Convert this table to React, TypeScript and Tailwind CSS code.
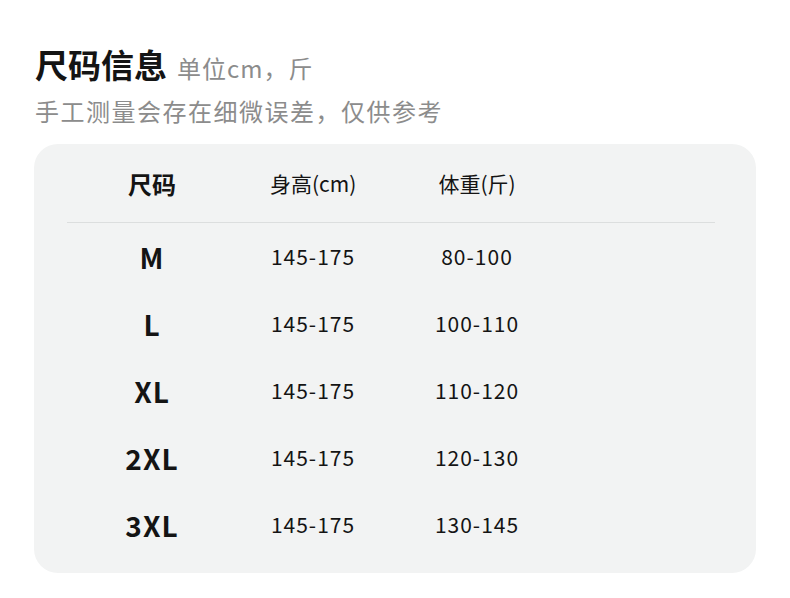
const rows = [
  { size: 'M', height: '145-175', weight: '80-100' },
  { size: 'L', height: '145-175', weight: '100-110' },
  { size: 'XL', height: '145-175', weight: '110-120' },
  { size: '2XL', height: '145-175', weight: '120-130' },
  { size: '3XL', height: '145-175', weight: '130-145' },
];

export default function App() {
  return (
    <div
      className="h-[598px] w-[790px] bg-white pl-[34px] pt-[40px] text-[#141414]"
      style={{ fontFamily: '"Noto Sans CJK SC", "Noto Sans", sans-serif' }}
    >
      <div className="flex items-baseline pl-px">
        <h1 className="text-[33px] font-bold leading-[48px]">尺码信息</h1>
        <span className="ml-[10px] text-[24px] tracking-[1px] text-[#8c8c8c]">单位cm，斤</span>
      </div>
      <p className="mt-[3px] pl-px text-[24px] leading-[40px] tracking-[1.5px] text-[#8c8c8c]">
        手工测量会存在细微误差，仅供参考
      </p>

      <div className="mt-[13px] h-[429px] w-[722px] rounded-[24px] bg-[#f2f3f3]">
        <div className="flex h-[78px] items-center pt-[2px] text-[21px]">
          <div className="w-[236px] text-center text-[24px] font-bold">尺码</div>
          <div className="w-[86px] whitespace-nowrap text-center">身高(cm)</div>
          <div className="w-[242px] text-center">体重(斤)</div>
        </div>
        <div className="ml-[33px] h-px w-[648px] bg-[#dcdede]" />
        {rows.map((r) => (
          <div key={r.size} className="flex h-[67px] items-center">
            <div className="w-[236px] text-center text-[28px] font-bold tracking-[1px]">{r.size}</div>
            <div className="w-[86px] whitespace-nowrap text-center text-[21px] tracking-[1px]">{r.height}</div>
            <div className="w-[242px] text-center text-[21px] tracking-[1px]">{r.weight}</div>
          </div>
        ))}
      </div>
    </div>
  );
}
